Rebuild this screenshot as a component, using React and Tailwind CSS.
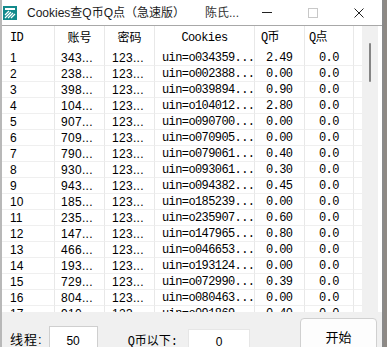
import React from "react";

const rows = [
  ["1", "343...", "123...", "uin=o034359...", "2.49", "0.0"],
  ["2", "238...", "123...", "uin=o002388...", "0.00", "0.0"],
  ["3", "398...", "123...", "uin=o039894...", "0.90", "0.0"],
  ["4", "104...", "123...", "uin=o104012...", "2.80", "0.0"],
  ["5", "907...", "123...", "uin=o090700...", "0.00", "0.0"],
  ["6", "709...", "123...", "uin=o070905...", "0.00", "0.0"],
  ["7", "790...", "123...", "uin=o079061...", "0.40", "0.0"],
  ["8", "930...", "123...", "uin=o093061...", "0.30", "0.0"],
  ["9", "943...", "123...", "uin=o094382...", "0.45", "0.0"],
  ["10", "185...", "123...", "uin=o185239...", "0.00", "0.0"],
  ["11", "235...", "123...", "uin=o235907...", "0.60", "0.0"],
  ["12", "147...", "123...", "uin=o147965...", "0.80", "0.0"],
  ["13", "466...", "123...", "uin=o046653...", "0.00", "0.0"],
  ["14", "193...", "123...", "uin=o193124...", "0.00", "0.0"],
  ["15", "729...", "123...", "uin=o072990...", "0.39", "0.0"],
  ["16", "804...", "123...", "uin=o080463...", "0.00", "0.0"],
  ["17", "910...", "123...", "uin=o091869...", "0.40", "0.0"],
];

const sans = "font-['Liberation_Sans','Noto_Sans_CJK_SC',sans-serif]";
const mono = "font-['Liberation_Mono','Noto_Sans_CJK_SC',monospace] tracking-[-0.6px]";

function Icon() {
  return (
    <svg width="14" height="14" viewBox="0 0 14 14">
      <rect x="0" y="0" width="14" height="14" fill="#138a8c" />
      <rect x="2" y="2" width="10" height="2" fill="#ffffff" />
      <path d="M2 9 L6 5 M2 12 L8 6 M5 12 L10 7 M8 12 L12 8" stroke="#ffffff" strokeWidth="1.2" />
    </svg>
  );
}

function Cell({ children, className = "" }) {
  return (
    <div className={`border-r border-b border-r-[#e8e8e8] border-b-[#efefef] h-[16px] leading-[16px] whitespace-nowrap overflow-hidden ${className}`}>
      {children}
    </div>
  );
}

export default function App() {
  return (
    <div className="w-[387px] h-[347px] flex bg-[#8e8984] overflow-hidden">
      <div className="w-[384px] h-[347px] flex flex-col bg-white border-l-2 border-r-2 border-l-[#b8b8b8] border-r-[#8a8a8a]">
        {/* title bar */}
        <div className={`h-[25px] flex items-center text-[12px] text-[#1a1a1a] ${sans}`}>
          <div className="ml-[1px] w-[24px] flex">
            <Icon />
          </div>
          <span className="w-[178px] whitespace-nowrap">Cookies查Q币Q点（急速版）</span>
          <span className="text-[#333]">陈氏...</span>
          <div className="flex-1" />
          <div className="w-[46px] h-[25px] flex items-center justify-center">
            <div className="w-[10px] h-[1px] bg-[#222]" />
          </div>
          <div className="w-[46px] h-[25px] flex items-center justify-center">
            <div className="w-[10px] h-[10px] border border-[#c8c8c8]" />
          </div>
          <div className="w-[46px] h-[25px] flex items-center justify-center">
            <svg width="10" height="10" viewBox="0 0 10 10">
              <path d="M0.5 0.5 L9.5 9.5 M9.5 0.5 L0.5 9.5" stroke="#222" strokeWidth="1" />
            </svg>
          </div>
        </div>

        {/* list view */}
        <div className="h-[287px] flex border-t border-t-[#a8a8a8] overflow-hidden">
          <div className="w-[360px] h-[286px] overflow-hidden">
            <div className="grid grid-cols-[53px_50px_50px_100px_50px_49px_8px] text-[12px] text-black">
              {/* header */}
              <div className={`h-[24px] leading-[24px] pl-[8px] border-r border-r-[#e8e8e8] ${mono}`}>ID</div>
              <div className={`h-[24px] leading-[24px] text-center border-r border-r-[#e8e8e8] ${sans}`}>账号</div>
              <div className={`h-[24px] leading-[24px] text-center border-r border-r-[#e8e8e8] ${sans}`}>密码</div>
              <div className={`h-[24px] leading-[24px] text-center border-r border-r-[#e8e8e8] ${mono}`}>Cookies</div>
              <div className={`h-[24px] leading-[24px] pl-[6px] border-r border-r-[#e8e8e8] ${mono}`}>Q币</div>
              <div className={`h-[24px] leading-[24px] pl-[4px] border-r border-r-[#e8e8e8] ${mono}`}>Q点</div>
              <div className="h-[24px]" />
              {rows.map((r) => (
                <React.Fragment key={r[0]}>
                  <Cell className={`pl-[8px] ${sans}`}>{r[0]}</Cell>
                  <Cell className={`pl-[6px] tracking-[0.3px] ${sans}`}>{r[1]}</Cell>
                  <Cell className={`pl-[7px] tracking-[0.3px] ${sans}`}>{r[2]}</Cell>
                  <Cell className={`pl-[7px] ${mono}`}>{r[3]}</Cell>
                  <Cell className={`pl-[11px] ${mono}`}>{r[4]}</Cell>
                  <Cell className={`pl-[14px] ${mono}`}>{r[5]}</Cell>
                  <div className="h-[16px] border-b border-b-[#efefef]" />
                </React.Fragment>
              ))}
            </div>
          </div>
          {/* scrollbar */}
          <div className="w-[16px] h-[286px] bg-[#f0f0f0] flex justify-center pt-[17px]">
            <div className="w-[2px] h-[39px] bg-[#858585] rounded-full" />
          </div>
          <div className="flex-1" />
        </div>

        {/* bottom panel */}
        <div className="flex-1 bg-[#f0f0f0] flex items-start text-black overflow-hidden">
          <span className={`ml-[8px] mt-[18px] text-[13px] tracking-[1px] whitespace-nowrap ${sans}`}>线程:</span>
          <div className={`ml-[6px] mt-[14px] w-[49px] h-[26px] bg-white border border-[#cfcfcf] border-b-0 flex justify-center pt-[5px] text-[12px] ${sans}`}>50</div>
          <span className={`ml-[30px] mt-[21px] text-[12px] whitespace-nowrap ${mono} tracking-[0px]`}>Q币以下:</span>
          <div className={`ml-[10px] mt-[17px] w-[62px] h-[24px] bg-white border border-[#e6e6e6] border-b-0 flex justify-center pt-[3px] text-[12px] ${sans}`}>0</div>
          <div className={`ml-[50px] mt-[6px] w-[77px] h-[34px] bg-[#fdfdfd] border border-[#d0d0d0] rounded-[4px] flex justify-center pt-[9px] text-[13px] ${sans}`}>开始</div>
        </div>
      </div>
    </div>
  );
}
